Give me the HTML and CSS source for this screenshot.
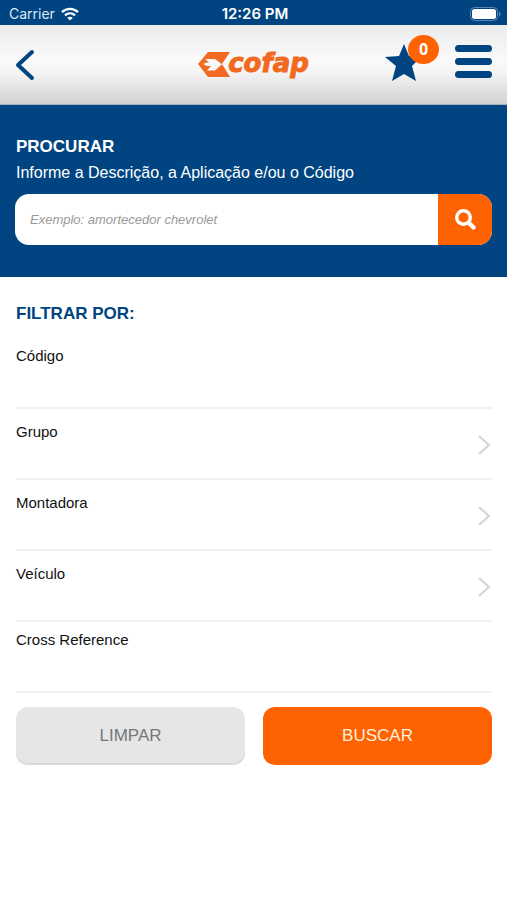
FILE: index.html
```
<!DOCTYPE html>
<html lang="pt-br">

<head>
    <meta charset="UTF-8">
    <meta name="viewport" content="width=device-width, initial-scale=1.0">
    <title>Cofap - Procurar</title>
    <link rel="stylesheet" href="styles.css">
</head>

<body>
    <div class="status">
        <div class="carrier">
            <span>Carrier</span>
            <svg width="18" height="14" viewBox="0 0 18 14" fill="none" stroke="#fff" stroke-width="2.4">
                <path d="M1 5.2C5.6.8 12.4.8 17 5.2" />
                <path d="M4 8.4c2.9-2.7 7.1-2.7 10 0" />
                <path d="M9 13.6L6.2 10.8c1.6-1.4 4-1.4 5.6 0z" fill="#fff" stroke="none" />
            </svg>
        </div>
        <div class="time">12:26 PM</div>
        <svg class="battery" width="31" height="14" viewBox="0 0 31 14">
            <rect x=".5" y=".5" width="27" height="13" rx="4" fill="none" stroke="#5f86b0" />
            <rect x="2" y="2" width="24" height="10" rx="2.5" fill="#fff" />
            <path d="M29 4.5c2 .8 2 4.2 0 5z" fill="#5f86b0" />
        </svg>
    </div>

    <header class="header">
        <button class="back" type="button" aria-label="Voltar">
            <svg width="20" height="32" viewBox="0 0 20 32" fill="none" stroke="#004481" stroke-width="4" stroke-linecap="round" stroke-linejoin="round">
                <path d="M17 3L3 16l14 13" />
            </svg>
        </button>
        <a class="logo" href="#">
            <svg width="33" height="25" viewBox="0 0 33 25">
                <path d="M10 0h22l-8 12 8 13H10L0 12z" fill="#f26a21" />
                <path d="M7 7h10l7 5.200-7 6.300H9l4-4.500H9L5 12l4-1.500h2z" fill="#f8f8f8" />
            </svg>
            <span>cofap</span>
        </a>
        <div class="actions">
            <button class="favorites" type="button" aria-label="Favoritos">
                <svg width="36" height="37" viewBox="0 0 36 37">
                    <path d="M19 0l5 12 11 2-8 8 4 15-12-7-12 7 4-15L0 13l14-1z" fill="#004481" />
                </svg>
                <span class="badge">0</span>
            </button>
            <button class="menu" type="button" aria-label="Menu">
                <span></span>
                <span></span>
                <span></span>
            </button>
        </div>
    </header>

    <form>
        <section class="search">
            <h1>PROCURAR</h1>
            <label for="termo">Informe a Descrição, a Aplicação e/ou o Código</label>
            <div class="search-box">
                <input id="termo" type="text" placeholder="Exemplo: amortecedor chevrolet">
                <button type="submit" aria-label="Procurar">
                    <svg width="21" height="21" viewBox="0 0 21 21" fill="none" stroke="#fff">
                        <circle cx="8.500" cy="8.500" r="6.800" stroke-width="3.400" />
                        <path d="M14 14l4.500 4.500" stroke-width="4.400" stroke-linecap="round" />
                    </svg>
                </button>
            </div>
        </section>

        <section class="filter">
            <h2>FILTRAR POR:</h2>
            <div class="field">
                <div class="control">
                    <label for="codigo">Código</label>
                    <input id="codigo" type="text">
                </div>
            </div>
            <div class="field field-select">
                <div class="control">
                    <label for="grupo">Grupo</label>
                    <select id="grupo"><option value=""></option></select>
                </div>
                <svg class="arrow" width="14" height="22" viewBox="0 0 14 22"><path d="M1 2l10 9-10 9" /></svg>
            </div>
            <div class="field field-select">
                <div class="control">
                    <label for="montadora">Montadora</label>
                    <select id="montadora"><option value=""></option></select>
                </div>
                <svg class="arrow" width="14" height="22" viewBox="0 0 14 22"><path d="M1 2l10 9-10 9" /></svg>
            </div>
            <div class="field field-select">
                <div class="control">
                    <label for="veiculo">Veículo</label>
                    <select id="veiculo"><option value=""></option></select>
                </div>
                <svg class="arrow" width="14" height="22" viewBox="0 0 14 22"><path d="M1 2l10 9-10 9" /></svg>
            </div>
            <div class="field">
                <div class="control">
                    <label for="cross">Cross Reference</label>
                    <input id="cross" type="text">
                </div>
            </div>
            <div class="buttons">
                <button class="btn btn-clear" type="reset">LIMPAR</button>
                <button class="btn btn-submit" type="submit">BUSCAR</button>
            </div>
        </section>
    </form>
</body>

</html>
```
FILE: styles.css
```
* {
    box-sizing: border-box;
}

body,
h1,
h2 {
    margin: 0;
    padding: 0;
}

body {
    background: #fff;
    font: 15px/20px "Liberation Sans", Arial, sans-serif;
    color: #111;
}

button,
input,
select {
    margin: 0;
    padding: 0;
    border: 0;
    background: none;
    font-family: inherit;
    outline: none;
}

button {
    cursor: pointer;
}

svg {
    display: block;
}

/* barra de status */
.status {
    display: grid;
    grid-template-columns: 1fr auto 1fr;
    align-items: center;
    height: 25px;
    padding: 2px 6px 0 9px;
    background: #004481;
    color: #fff;
    font: 14px/20px Inter, sans-serif;
}

.carrier {
    display: flex;
    align-items: center;
    gap: 6px;
    color: #dce8f4;
}

.time {
    font-size: 15px;
    font-weight: 600;
}

.battery {
    justify-self: end;
}

/* topo */
.header {
    display: grid;
    grid-template-columns: 1fr auto 1fr;
    align-items: center;
    height: 80px;
    padding: 0 15px;
    background: linear-gradient(#ebebeb, #fafafa 45%, #f4f4f4 60%, #d2d2d2);
    border-bottom: 1px solid #9fb0c2;
}

.back {
    justify-self: start;
}

.logo {
    display: flex;
    align-items: center;
    color: #f26a21;
    text-decoration: none;
    font: italic bold 26px/28px "DejaVu Sans", sans-serif;
    -webkit-text-stroke: 1px #f26a21;
}

.logo span {
    margin: -3px 0 0 -3px;
}

.actions {
    display: flex;
    justify-content: flex-end;
    align-items: center;
    gap: 34px;
}

.favorites {
    position: relative;
    margin-bottom: 4px;
}

.badge {
    position: absolute;
    top: -9px;
    left: 23px;
    width: 31px;
    height: 29px;
    border-radius: 50%;
    background: #ff6200;
    color: #fff;
    font: bold 16px/29px "Open Sans", sans-serif;
    text-align: center;
}

.menu {
    display: flex;
    flex-direction: column;
    gap: 6px;
    width: 37px;
    margin-bottom: 6px;
}

.menu span {
    width: 100%;
    height: 7px;
    border-radius: 4px;
    background: #004481;
}

/* procurar */
.search {
    padding: 30px 15px 32px;
    background: #004481;
    color: #fff;
}

.search h1,
.filter h2 {
    padding-left: 1px;
    font-size: 17px;
    line-height: 24px;
}

.search label {
    display: block;
    padding: 4px 1px 11px;
    font-size: 16px;
}

.search-box {
    display: flex;
    height: 51px;
    border-radius: 14px;
    overflow: hidden;
    background: #fff;
}

.search-box input {
    flex: 1;
    min-width: 0;
    padding: 0 15px;
    font-size: 13px;
}

.search-box input::placeholder {
    color: #999;
    font-style: italic;
}

.search-box button {
    display: flex;
    align-items: center;
    justify-content: center;
    width: 54px;
    background: #ff6200;
}

/* filtros */
.filter {
    padding: 25px 15px;
}

.filter h2 {
    margin-bottom: 12px;
    color: #004481;
}

.field {
    display: flex;
    align-items: center;
    height: 71px;
    margin-left: 1px;
    padding-top: 8px;
    border-bottom: 2px solid #f1f1f1;
}

.field-select {
    padding-top: 2px;
}

.control {
    display: flex;
    flex-direction: column;
    flex: 1;
    align-self: stretch;
}

.field-select .control {
    padding-top: 11px;
}

.control input,
.control select {
    flex: 1;
    width: 100%;
    min-height: 0;
    font-size: 15px;
    appearance: none;
}

.arrow {
    fill: none;
    stroke: #d4d4d4;
    stroke-width: 2;
}

.buttons {
    display: grid;
    grid-template-columns: 1fr 1fr;
    gap: 18px;
    margin: 14px 0 0 1px;
}

.btn {
    height: 58px;
    border-radius: 12px;
    font-size: 17px;
}

.btn-clear {
    background: #e6e6e6;
    box-shadow: inset 0 -2px #d9d9d9;
    color: #777;
}

.btn-submit {
    background: #ff6200;
    color: #ffeede;
}
```
